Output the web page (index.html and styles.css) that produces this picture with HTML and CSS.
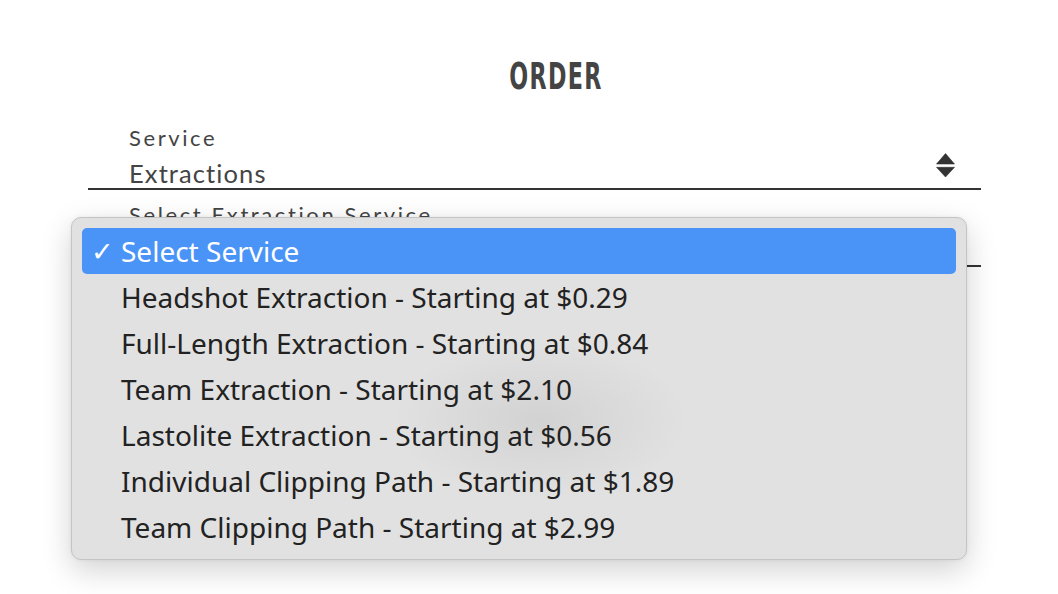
FILE: index.html
```html
<!DOCTYPE html>
<html>
<head>
<meta charset="utf-8">
<link rel="stylesheet" href="styles.css">
</head>
<body>
<div class="page">
  <h1 class="title">ORDER</h1>
  <form class="form">
    <div class="field">
      <label class="label">Service</label>
      <div class="select">
        <span class="value">Extractions</span>
        <svg class="arrows" width="19" height="24" viewBox="0 0 19 24"><path d="M9.5 0.5 L18.5 11 H0.5 Z M0.5 14.3 H18.5 L9.5 24 Z" fill="#333" stroke="#333" stroke-width="0.6" stroke-linejoin="round"/></svg>
      </div>
    </div>
    <div class="field">
      <label class="label">Select Extraction Service</label>
      <div class="select"><span class="value">&nbsp;</span></div>
    </div>
  </form>
  <div class="menu">
    <div class="item active"><span class="check">✓</span>Select Service</div>
    <div class="item">Headshot Extraction - Starting at $0.29</div>
    <div class="item">Full-Length Extraction - Starting at $0.84</div>
    <div class="item">Team Extraction - Starting at $2.10</div>
    <div class="item">Lastolite Extraction - Starting at $0.56</div>
    <div class="item">Individual Clipping Path - Starting at $1.89</div>
    <div class="item">Team Clipping Path - Starting at $2.99</div>
    <div class="blob"></div>
  </div>
</div>
</body>
</html>
```
FILE: styles.css
```css
* { box-sizing: border-box; }
html, body { margin: 0; padding: 0; background: #fff; }
body { width: 1058px; height: 594px; overflow: hidden; }
.page { position: relative; padding: 56px 77px 0 88px; }
.title {
  margin: 0;
  text-align: center;
  padding-left: 66px;
  font-family: "DejaVu Sans Condensed", "DejaVu Sans", sans-serif;
  font-stretch: condensed;
  font-weight: bold;
  font-size: 38px;
  letter-spacing: 2px;
  transform: scaleX(0.65);
  color: #444;
  line-height: 40px;
}
.form { margin-top: 28px; display: flex; flex-direction: column; gap: 11px; }
.field { display: flex; flex-direction: column; }
.label {
  padding-left: 41px;
  font-family: Lato, sans-serif;
  font-size: 22px;
  letter-spacing: 2.6px;
  color: #444;
  line-height: 28px;
  font-variant-ligatures: none;
}
.select {
  display: flex; align-items: flex-start; justify-content: space-between;
  padding: 0 26px 0 41px;
  border-bottom: 2px solid #333;
}
.value {
  font-family: Lato, sans-serif; font-size: 25.5px; color: #444; line-height: 30px;
  margin-top: 6px;
  letter-spacing: 1.1px;
  font-variant-ligatures: none;
}
.arrows { display: block; margin-top: 0.5px; }
.menu {
  position: absolute;
  left: 71px; top: 217px;
  width: 896px; height: 343px;
  background: #e1e1e1;
  border: 1px solid #c4c4c4;
  border-radius: 10px;
  box-shadow: 0 10px 30px rgba(0,0,0,0.18), 0 0 4px rgba(0,0,0,0.06);
  padding: 10px 10px;
  display: flex; flex-direction: column;
  overflow: hidden;
}
.item {
  position: relative;
  height: 46px;
  line-height: 46px;
  padding-left: 39px;
  font-family: "Noto Sans", "Open Sans", sans-serif;
  font-size: 28px;
  color: #222;
  border-radius: 5px;
  z-index: 1;
  white-space: nowrap;
}
.item.active { background: #4a94f8; color: #fff; }
.check { position: absolute; left: 9px; top: 0; font-size: 27px; }
.blob {
  position: absolute; left: 318px; top: 122px; width: 300px; height: 160px;
  background: radial-gradient(ellipse at center, rgba(0,0,0,0.065), rgba(0,0,0,0) 70%);
  z-index: 0;
}
```
